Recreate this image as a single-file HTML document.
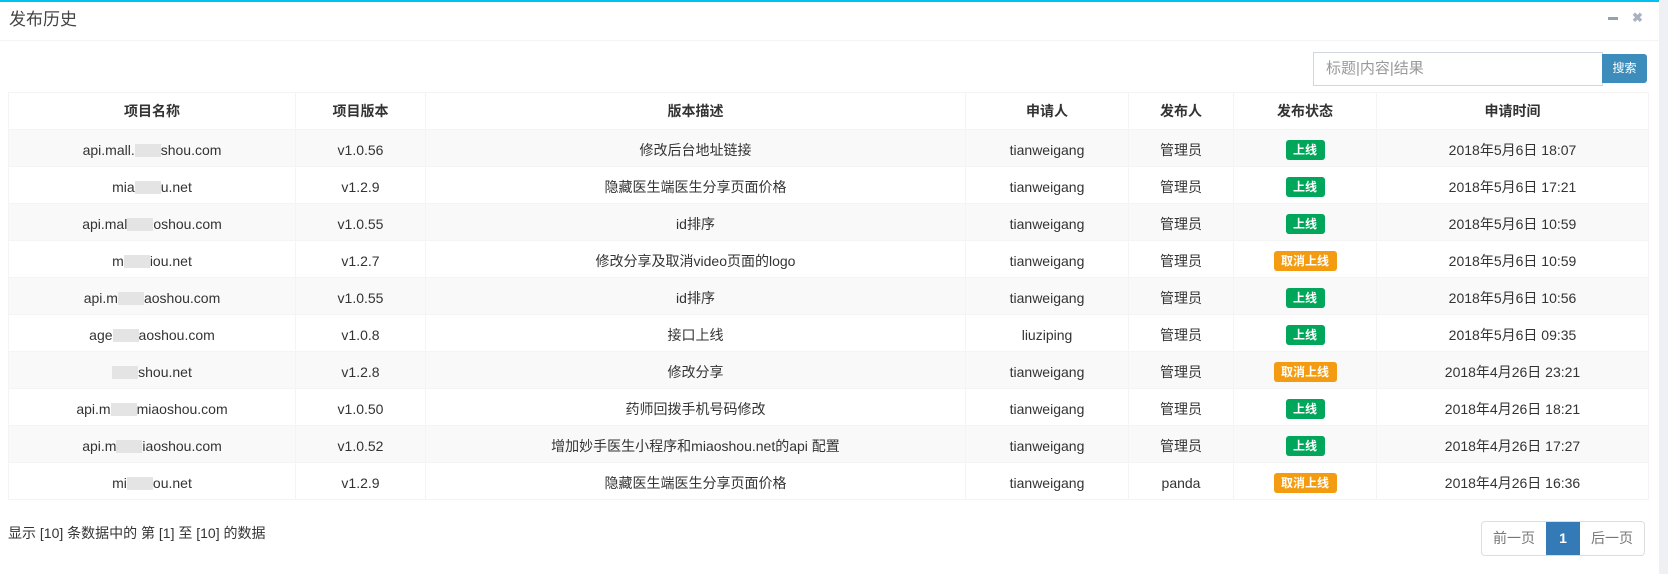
<!DOCTYPE html>
<html><head><meta charset="utf-8">
<style>
*{box-sizing:border-box;margin:0;padding:0}
body{width:1668px;height:574px;background:#fff;font-family:"Liberation Sans","Noto Sans CJK SC",sans-serif;color:#333;font-size:14px;position:relative;overflow:hidden}
.topline{position:absolute;left:0;top:0;width:1659px;height:2px;background:#00c0ef}
.scroll{position:absolute;left:1659px;top:0;width:9px;height:574px;background:#eef0f4}
.title{position:absolute;left:9px;top:8px;font-size:17px;color:#444;line-height:24px}
.sep{position:absolute;left:0;top:40px;width:1659px;height:1px;background:#f4f4f4}
.minus{position:absolute;left:1608px;top:17px;width:10px;height:3px;background:#97a0b3}
.close{position:absolute;left:1632px;top:10px;font-size:13px;font-weight:bold;color:#a9b0c0;line-height:16px}
.inp{position:absolute;left:1313px;top:52px;width:290px;height:34px;border:1px solid #d2d6de;font-size:15px;color:#999;padding-left:12px;line-height:32px}
.btn{position:absolute;left:1602px;top:54px;width:45px;height:29px;background:#3c8dbc;border-radius:0 3px 3px 0;color:#fff;font-size:12px;text-align:center;line-height:29px}
table{position:absolute;left:8px;top:92px;border-collapse:collapse;table-layout:fixed;width:1640px}
td,th{border:1px solid #f4f4f4;text-align:center;height:37px;padding:0;white-space:nowrap}
tbody td{padding-top:3px}
th{font-weight:bold;height:37px}
tbody tr:nth-child(odd){background:#f9f9f9}
.b{display:inline-block;width:26px;height:13px;background:#e4e4e4;vertical-align:middle}
.g,.o{display:inline-block;color:#fff;font-weight:bold;font-size:12px;height:20px;line-height:20px;border-radius:3px;padding:0 5px}
.g{background:#00a65a;width:39px}
.o{background:#f39c12;width:63px}
.foot{position:absolute;left:8px;top:523px;font-size:14px;line-height:20px}
.pg{position:absolute;left:1481px;top:521px;height:35px;display:flex;border:1px solid #ddd;border-radius:4px;overflow:hidden}
.pg div{height:33px;line-height:33px;font-size:14px;color:#777;padding:0 11px}
.pg .a{background:#337ab7;color:#fff;width:34px;text-align:center;padding:0;font-weight:bold}
</style></head><body>
<div class="topline"></div>
<div class="scroll"></div>
<div class="title">发布历史</div>
<div class="minus"></div>
<div class="close">✖</div>
<div class="sep"></div>
<div class="inp">标题|内容|结果</div>
<div class="btn">搜索</div>
<table>
<colgroup><col style="width:287px"><col style="width:130px"><col style="width:540px"><col style="width:163px"><col style="width:105px"><col style="width:143px"><col style="width:272px"></colgroup>
<thead><tr><th>项目名称</th><th>项目版本</th><th>版本描述</th><th>申请人</th><th>发布人</th><th>发布状态</th><th>申请时间</th></tr></thead>
<tbody>
<tr><td>api.mall.<span class="b"></span>shou.com</td><td>v1.0.56</td><td>修改后台地址链接</td><td>tianweigang</td><td>管理员</td><td><span class="g">上线</span></td><td>2018年5月6日 18:07</td></tr>
<tr><td>mia<span class="b"></span>u.net</td><td>v1.2.9</td><td>隐藏医生端医生分享页面价格</td><td>tianweigang</td><td>管理员</td><td><span class="g">上线</span></td><td>2018年5月6日 17:21</td></tr>
<tr><td>api.mal<span class="b"></span>oshou.com</td><td>v1.0.55</td><td>id排序</td><td>tianweigang</td><td>管理员</td><td><span class="g">上线</span></td><td>2018年5月6日 10:59</td></tr>
<tr><td>m<span class="b"></span>iou.net</td><td>v1.2.7</td><td>修改分享及取消video页面的logo</td><td>tianweigang</td><td>管理员</td><td><span class="o">取消上线</span></td><td>2018年5月6日 10:59</td></tr>
<tr><td>api.m<span class="b"></span>aoshou.com</td><td>v1.0.55</td><td>id排序</td><td>tianweigang</td><td>管理员</td><td><span class="g">上线</span></td><td>2018年5月6日 10:56</td></tr>
<tr><td>age<span class="b"></span>aoshou.com</td><td>v1.0.8</td><td>接口上线</td><td>liuziping</td><td>管理员</td><td><span class="g">上线</span></td><td>2018年5月6日 09:35</td></tr>
<tr><td><span class="b"></span>shou.net</td><td>v1.2.8</td><td>修改分享</td><td>tianweigang</td><td>管理员</td><td><span class="o">取消上线</span></td><td>2018年4月26日 23:21</td></tr>
<tr><td>api.m<span class="b"></span>miaoshou.com</td><td>v1.0.50</td><td>药师回拨手机号码修改</td><td>tianweigang</td><td>管理员</td><td><span class="g">上线</span></td><td>2018年4月26日 18:21</td></tr>
<tr><td>api.m<span class="b"></span>iaoshou.com</td><td>v1.0.52</td><td>增加妙手医生小程序和miaoshou.net的api 配置</td><td>tianweigang</td><td>管理员</td><td><span class="g">上线</span></td><td>2018年4月26日 17:27</td></tr>
<tr><td>mi<span class="b"></span>ou.net</td><td>v1.2.9</td><td>隐藏医生端医生分享页面价格</td><td>tianweigang</td><td>panda</td><td><span class="o">取消上线</span></td><td>2018年4月26日 16:36</td></tr>
</tbody></table>
<div class="foot">显示 [10] 条数据中的 第 [1] 至 [10] 的数据</div>
<div class="pg"><div>前一页</div><div class="a">1</div><div>后一页</div></div>
</body></html>
